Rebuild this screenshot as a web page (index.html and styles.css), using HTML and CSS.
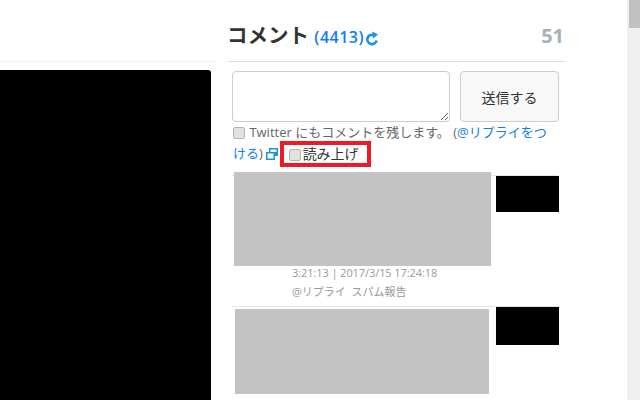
FILE: index.html
```html
<!DOCTYPE html>
<html lang="ja">
<head>
  <meta charset="UTF-8" />
  <title>コメント</title>
  <link rel="stylesheet" href="styles.css">
</head>
<body>
  <div class="page">
    <!-- Player -->
    <div class="player-col">
      <div class="player"></div>
    </div>

    <!-- Comments -->
    <div class="comment-col">
      <div class="comment-head">
        <h2 class="comment-title">コメント <small class="comment-count">(4413)</small>
          <svg class="reload-icon" viewBox="0 0 14 15" width="14" height="15">
            <path d="M11.6 9.4A4.7 4.7 0 1 1 8.6 4" fill="none" stroke="#1b95e0" stroke-width="2.6"/>
            <path d="M7.4 0.4L13 3.4L8 7.6Z" fill="#1b95e0"/>
          </svg>
        </h2>
        <span class="viewer-count">51</span>
      </div>

      <div class="comment-form">
        <textarea class="comment-input"></textarea>
        <button class="send-btn">送信する</button>
      </div>

      <div class="options">
        <input type="checkbox" class="check check-twitter" /> Twitter にもコメントを残します。 (<a href="#">@リプライをつける</a>)
        <svg class="popup-icon" viewBox="0 0 12 12" width="12" height="12">
          <path d="M3 0H12V8H9V12H0V4H3Z" fill="#1b95e0"/>
          <rect x="4.5" y="1.5" width="6" height="2.5" fill="#fff"/>
          <rect x="1.5" y="5.5" width="6" height="5" fill="#fff"/>
        </svg>
        <label class="read-aloud"><input type="checkbox" class="check" />読み上げ</label>
      </div>

      <div class="comment-list">
        <div class="comment">
          <div class="comment-main">
            <div class="comment-img img-first"></div>
            <div class="comment-meta">3:21:13 | 2017/3/15 17:24:18</div>
            <div class="comment-actions">@リプライ&nbsp;&nbsp;スパム報告</div>
          </div>
          <div class="comment-user user-first"></div>
        </div>
        <div class="comment">
          <div class="comment-main">
            <div class="comment-img img-second"></div>
          </div>
          <div class="comment-user user-second"></div>
        </div>
      </div>
    </div>

    <div class="scrollbar"><div class="scroll-thumb"></div></div>
  </div>
</body>
</html>
```

FILE: styles.css
```css
html,
body {
  margin: 0;
  padding: 0;
  height: 400px;
  overflow: hidden;
  background-color: #fff;
}

body {
  font-family: "Open Sans", "Noto Sans CJK JP", sans-serif;
  font-size: 13px;
  color: #666;
}

.page {
  display: flex;
  height: 400px;
  overflow: hidden;
}

.player-col {
  width: 216px;
  flex-shrink: 0;
  margin-top: 61px;
  border-top: 1px solid #eef3f9;
}

.player {
  width: 211px;
  height: 330px;
  margin-top: 8px;
  background-color: #000;
  border-top-right-radius: 3px;
}

.comment-col {
  width: 337px;
  margin-left: 12px;
  flex-shrink: 0;
}

.comment-head {
  display: flex;
  justify-content: space-between;
  align-items: center;
  height: 61px;
  border-bottom: 1px solid #d5dee6;
}

.comment-title {
  margin: 10px 0 0 -1px;
  font-size: 20.5px;
  font-weight: bold;
  color: #333;
  line-height: 30px;
}

.comment-count {
  font-size: 16px;
  font-weight: 600;
  letter-spacing: 0.5px;
  color: #0f7cf2;
}

.reload-icon {
  margin-left: -4px;
  vertical-align: -3px;
}

.viewer-count {
  margin: 9px 1px 0 0;
  font-size: 20px;
  font-weight: bold;
  color: #aab0b5;
}

.comment-form {
  display: flex;
  gap: 10px;
  margin: 9px 6px 0 4px;
}

.comment-input {
  width: 216px;
  height: 49px;
  margin: 0;
  padding: 0;
  border: 1px solid #ccc;
  border-radius: 4px;
}

.send-btn {
  width: 99px;
  height: 51px;
  padding: 0;
  border: 1px solid #ccc;
  border-radius: 4px;
  background-color: #f8f8f8;
  color: #333;
  font-family: inherit;
  font-size: 14px;
}

.options {
  margin: 0 10px 0 4px;
  padding-left: 1px;
  line-height: 21px;
  height: 53px;
}

.options a {
  color: #0f7cf2;
  text-decoration: none;
}

.check {
  appearance: none;
  width: 12px;
  height: 12px;
  margin: 0;
  vertical-align: -2px;
  background-color: #e2e2e2;
  border: 1px solid #b4b4b4;
  border-radius: 2px;
}

.check-twitter {
  margin-right: 1px;
}

.popup-icon {
  vertical-align: -2px;
}

.read-aloud {
  display: inline-block;
  vertical-align: middle;
  margin: -5px 0 -3px -2px;
  padding: 0 8px 0 5px;
  border: 4px solid #ed1c24;
  font-size: 14px;
  line-height: 18px;
  color: #333;
}

.read-aloud .check {
  margin-right: 2px;
}

.comment-list {
  margin: 0 6px 0 4px;
}

.comment {
  display: flex;
  justify-content: space-between;
  height: 130px;
  border-top: 1px solid #e4e4ec;
}

.comment-main {
  width: 260px;
}

.comment-img {
  background-color: #c3c3c3;
}

.img-first {
  width: 257px;
  height: 94px;
  margin: -4px 0 0 2px;
}

.img-second {
  width: 254px;
  height: 85px;
  margin: 2px 0 0 3px;
}

.comment-meta,
.comment-actions {
  margin-left: 60px;
  font-size: 11px;
  color: #999;
  line-height: 18px;
}

.comment-meta {
  margin-top: -2px;
  letter-spacing: -0.08px;
}

.comment-actions {
  margin-top: 1px;
}

.comment-user {
  width: 63px;
  background-color: #000;
}

.user-first {
  height: 36px;
}

.user-second {
  height: 38px;
}

.scrollbar {
  margin-left: auto;
  width: 13px;
  background-color: #f0f0f0;
  display: flex;
  justify-content: flex-end;
}

.scroll-thumb {
  width: 11px;
  height: 28px;
  background-color: #c1c1c1;
}
```
